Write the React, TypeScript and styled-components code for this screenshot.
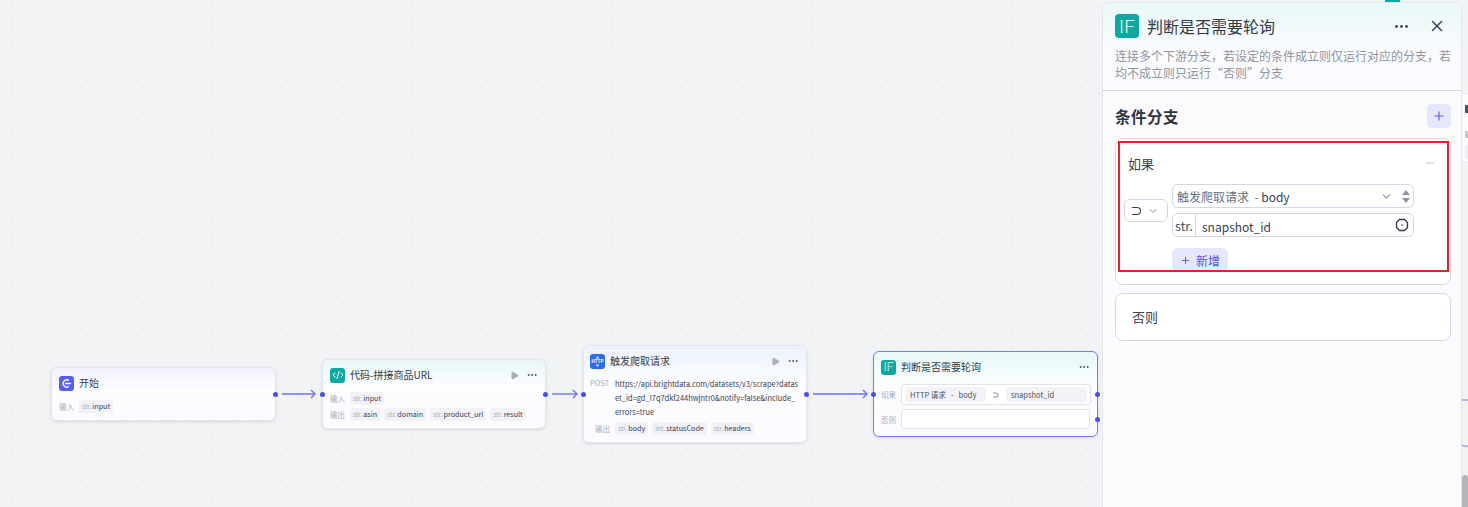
import styled, { createGlobalStyle } from 'styled-components'
import { ChevronDown, Ellipsis, Minus, Play, Plus, X } from 'lucide-react'

const GlobalStyle = createGlobalStyle`
  html, body {
    margin: 0;
    padding: 0;
    width: 1468px;
    height: 507px;
    overflow: hidden;
    background: #f2f3f5;
    font-family: "Noto Sans CJK SC", "Noto Sans", sans-serif;
    color: #354052;
  }
  * { box-sizing: border-box; }
`

const Page = styled.div`
  position: relative;
  width: 1468px;
  height: 507px;
  overflow: hidden;
  background-color: #f2f3f5;
  background-image: radial-gradient(circle at 1px 1px, #e9eaec 1px, transparent 1.2px);
  background-size: 12.5px 12.7px;
  background-position: 11px 4px;
`

const Edges = styled.svg`
  position: absolute;
  left: 0;
  top: 0;
  width: 1468px;
  height: 507px;
  pointer-events: none;
`

const Node = styled.div<{ $x: number; $y: number; $w: number; $h: number; $tint: string; $selected?: boolean; $pad?: number }>`
  position: absolute;
  left: ${p => p.$x}px;
  top: ${p => p.$y}px;
  width: ${p => p.$w}px;
  height: ${p => p.$h}px;
  border-radius: 6px;
  border: 1px solid ${p => (p.$selected ? '#7a7cf0' : '#e4e5ee')};
  background: linear-gradient(180deg, ${p => p.$tint} 0%, #fdfdff 42%, #fbfbff 100%);
  box-shadow: 0 1px 3px rgba(16, 24, 40, 0.12);
  padding: 0 7px 0 ${p => p.$pad ?? 7}px;
`

const NodeHead = styled.div<{ $h: number; $below?: number }>`
  display: flex;
  align-items: center;
  height: ${p => p.$h}px;
  padding-bottom: ${p => p.$below ?? 0}px;
  gap: 5px;
`

const Badge = styled.div<{ $bg: string; $size?: number }>`
  width: ${p => p.$size ?? 15}px;
  height: ${p => p.$size ?? 15}px;
  border-radius: ${p => ((p.$size ?? 15) > 18 ? 4 : 3)}px;
  background: ${p => p.$bg};
  color: #fff;
  flex: none;
  display: flex;
  align-items: center;
  justify-content: center;
  overflow: hidden;
`

const IfText = styled.span<{ $size: number }>`
  font-family: Roboto, "Liberation Sans", sans-serif;
  font-size: ${p => p.$size}px;
  line-height: 1;
  font-weight: 300;
  color: #e6fbf8;
`

const HttpBadge = styled(Badge)`
  flex-direction: column;
  gap: 0;
`

const HttpText = styled.span`
  font-family: "Liberation Sans", sans-serif;
  font-size: 4.500px;
  font-weight: 700;
  letter-spacing: 0.1px;
  line-height: 5px;
`

const NodeTitle = styled.div`
  flex: 1;
  font-size: 10px;
  line-height: 14px;
  white-space: nowrap;
  color: #333c4d;
  font-weight: 400;
`

const NodeActions = styled.div`
  display: flex;
  align-items: center;
  gap: 7px;
  color: #4a5263;
`

const Row = styled.div<{ $label?: number }>`
  display: flex;
  align-items: center;
  gap: 4px;
  height: 13px;
  margin-bottom: 3px;
  padding-left: ${p => p.$label ?? 0}px;
`

const Label = styled.div<{ $w?: number }>`
  font-size: 7.500px;
  color: #a8acb6;
  width: ${p => p.$w ?? 15}px;
  margin-right: 1px;
  flex: none;
  white-space: nowrap;
`

const Chip = styled.div`
  display: flex;
  align-items: center;
  gap: 1px;
  height: 13px;
  line-height: 13px;
  padding: 0 3px;
  border-radius: 3px;
  background: #f1f1f6;
  font-size: 7.200px;
  color: #39414f;
  white-space: nowrap;
`

const ChipType = styled.span`
  font-size: 6.500px;
  color: #a8acb6;
`

const UrlRow = styled.div`
  display: flex;
  gap: 5px;
  margin: 1px 0 3px;
`

const UrlText = styled.div`
  width: 185px;
  font-size: 7.450px;
  line-height: 14px;
  color: #39414f;
  word-break: break-all;
`

const Port = styled.div<{ $side: 'left' | 'right'; $y: number }>`
  position: absolute;
  ${p => p.$side}: -3px;
  top: ${p => p.$y}px;
  width: 5px;
  height: 5px;
  border-radius: 50%;
  background: #4b4ee8;
`

const IfRows = styled.div`
  display: flex;
  flex-direction: column;
  gap: 4px;
  margin-top: 2px;
`

const IfRow = styled.div`
  display: flex;
  align-items: center;
  gap: 4px;
`

const IfBox = styled.div<{ $h: number }>`
  flex: 1;
  height: ${p => p.$h}px;
  border: 1px solid #e2e3ea;
  border-radius: 3px;
  background: #fff;
  display: flex;
  align-items: center;
  padding: 0 3px;
  gap: 6px;
  font-size: 7.500px;
  color: #4a5263;
`

const IfChip = styled.div<{ $w: number }>`
  width: ${p => p.$w}px;
  height: 15px;
  border-radius: 3px;
  background: #f2f2f7;
  display: flex;
  align-items: center;
  padding: 0 5px;
  white-space: pre;
  font-size: 7.500px;
  color: #4a5263;
`

const Panel = styled.aside`
  position: absolute;
  left: 1102px;
  top: 2px;
  width: 360px;
  bottom: -4px;
  border: 1px solid #e4e5ef;
  border-radius: 8px 8px 0 0;
  background: #fbfbfe;
  display: flex;
  flex-direction: column;
`

const PanelHead = styled.header`
  height: 88px;
  flex: none;
  padding: 11px 12px 0;
  background: linear-gradient(180deg, #e9f8f8 0%, #fafbfe 55%, #fbfbfe 100%);
  border-radius: 8px 8px 0 0;
  border-bottom: 1px solid #d6d5e6;
`

const PanelTitleRow = styled.div`
  display: flex;
  align-items: center;
  gap: 8px;
  height: 24px;
`

const PanelTitle = styled.h2`
  flex: 1;
  margin: 0;
  font-size: 16px;
  font-weight: 400;
  color: #333845;
  white-space: nowrap;
`

const PanelTools = styled.div`
  display: flex;
  align-items: center;
  gap: 18px;
  margin-right: 3px;
  color: #3b4354;
`

const PanelDesc = styled.p`
  margin: 9px 0 0;
  font-size: 12px;
  line-height: 17px;
  color: #8f93a0;
  width: 340px;
`

const PanelBody = styled.div`
  padding: 13px 10px 0 12px;
  display: flex;
  flex-direction: column;
`

const SectionHead = styled.div`
  display: flex;
  align-items: center;
  justify-content: space-between;
  height: 24px;
  margin-bottom: 10px;
`

const SectionTitle = styled.h3`
  margin: 0;
  font-size: 15.500px;
  font-weight: 700;
  color: #2f3441;
  letter-spacing: 0.5px;
`

const SquareButton = styled.div`
  width: 24px;
  height: 24px;
  border-radius: 5px;
  background: #e6e6fd;
  color: #5d5df0;
  display: flex;
  align-items: center;
  justify-content: center;
`

const BranchCard = styled.section<{ $h: number }>`
  height: ${p => p.$h}px;
  border: 1px solid #d6d7e6;
  border-radius: 8px;
  background: #fff;
  margin-bottom: 8px;
  padding: 0 13px 0 8px;
`

const BranchTitle = styled.div<{ $top: number; $left: number }>`
  display: flex;
  align-items: center;
  justify-content: space-between;
  height: 20px;
  margin-top: ${p => p.$top}px;
  padding-left: ${p => p.$left}px;
  font-size: 13px;
  font-weight: 400;
  color: #3c4250;
`

const MinusMark = styled.span`
  color: #c3c5cf;
  display: flex;
`

const CondGrid = styled.div`
  display: flex;
  align-items: center;
  gap: 4px;
  margin-top: 11px;
`

const OpSelect = styled.div`
  width: 44px;
  height: 23px;
  border: 1px solid #d6d7e6;
  border-radius: 6px;
  display: flex;
  align-items: center;
  justify-content: space-between;
  padding: 0 8px 0 5px;
  font-size: 12px;
  color: #3c4250;
  background: #fff;
`

const CondFields = styled.div`
  display: flex;
  flex-direction: column;
  gap: 5px;
  width: 242px;
`

const Field = styled.div`
  height: 24px;
  border: 1px solid #d6d7e6;
  border-radius: 6px;
  display: flex;
  align-items: center;
  background: #fff;
  font-size: 12px;
  color: #3c4250;
  overflow: hidden;
`

const FieldValue = styled.span`
  flex: 1;
  padding-left: 4px;
  white-space: pre;
  color: #6b7080;
`

const FieldStrong = styled.span`
  color: #3c4250;
`

const Stepper = styled.div`
  width: 14px;
  display: flex;
  flex-direction: column;
  align-items: center;
  gap: 3px;
  margin-left: 6px;
`

const Arrow = styled.span<{ $down?: boolean }>`
  width: 0;
  height: 0;
  border-left: 4px solid transparent;
  border-right: 4px solid transparent;
  ${p => (p.$down ? 'border-top: 5px solid #8f93a0;' : 'border-bottom: 5px solid #8f93a0;')}
`

const StrTag = styled.span`
  width: 23px;
  height: 100%;
  flex: none;
  border-right: 1px solid #d6d7e6;
  display: flex;
  align-items: center;
  justify-content: center;
  font-size: 12.500px;
  color: #4a5263;
`

const StrValue = styled.span`
  flex: 1;
  padding-left: 6px;
  padding-top: 3px;
`

const AddButton = styled.div`
  width: 56px;
  height: 24px;
  margin: 11px 0 0 48px;
  border-radius: 6px;
  background: #e6e6fd;
  color: #5356d6;
  display: flex;
  align-items: center;
  justify-content: center;
  gap: 5px;
  font-size: 12px;
  font-weight: 400;
`

const Highlight = styled.div`
  position: absolute;
  left: 1118px;
  top: 141px;
  width: 331px;
  height: 131px;
  border: 2px solid #ee1c25;
  pointer-events: none;
`

const BehindCard = styled.div`
  position: absolute;
  left: 1462px;
  top: 93px;
  width: 6px;
  height: 70px;
  padding: 11px 0 0 3px;
  overflow: hidden;
  background: #fbfbfe;
  border-top: 1px solid #e8e9f0;
  border-bottom: 1px solid #e8e9f0;
`

// only slivers of this card show past the panel, so they are plain marks
const BehindMark = styled.div<{ $h: number; $top: number; $color: string }>`
  width: 3px;
  height: ${p => p.$h}px;
  margin-top: ${p => p.$top}px;
  background: ${p => p.$color};
`

const BehindTop = styled.div`
  position: absolute;
  left: 1385px;
  top: 0;
  width: 15px;
  height: 2px;
  background: #12a89d;
`

const ScrollThumb = styled.div`
  position: absolute;
  left: 1462px;
  top: 475px;
  width: 6px;
  height: 32px;
  border-radius: 3px 3px 0 0;
  background: #b3b5b8;
`

function IfBadge({ big }: { big?: boolean }) {
  return (
    <Badge $bg="#0fa8a0" $size={big ? 24 : 15}>
      <IfText $size={big ? 19 : 12}>IF</IfText>
    </Badge>
  )
}

function TypedChip({ type, name }: { type: string; name: string }) {
  return (
    <Chip>
      <ChipType>{type}</ChipType>
      {name}
    </Chip>
  )
}

function NodeTools({ run = true }: { run?: boolean }) {
  return (
    <NodeActions>
      {run && <Play size={9} fill="#a9adb8" color="#a9adb8" />}
      <Ellipsis size={12} />
    </NodeActions>
  )
}

function Supset({ size }: { size: number }) {
  return (
    <svg width={size} height={size} viewBox="0 0 10 10" fill="none" stroke="currentColor" strokeWidth="0.8">
      <path d="M1.500 2.500h3.500a2.500 2.500 0 0 1 0 5H1.500" />
    </svg>
  )
}

function Edge({ x1, x2 }: { x1: number; x2: number }) {
  return (
    <>
      <path d={`M${x1} 394H${x2}`} stroke="#6f72f2" strokeWidth="1.4" fill="none" />
      <path d={`M${x2 - 4} 390l4 4-4 4`} stroke="#6f72f2" strokeWidth="1.4" fill="none" />
    </>
  )
}

export default function App() {
  return (
    <Page lang="zh-CN">
      <GlobalStyle />
      <Edges viewBox="0 0 1468 507">
        <Edge x1={282} x2={315} />
        <Edge x1={552} x2={577} />
        <Edge x1={813} x2={867} />
        <path d="M1462 400H1468" stroke="#7b7ef2" strokeWidth="1" />
        <path d="M1462 445.500L1468 446.500" stroke="#7b7ef2" strokeWidth="1" />
      </Edges>

      <Node $x={51} $y={367} $w={225} $h={54} $tint="#f1f0fd">
        <NodeHead $h={32} $below={2}>
          <Badge $bg="#5a5ff0">
            <svg width="11" height="11" viewBox="0 0 12 12" fill="none">
              <path d="M8.500 2.600A4 4 0 1 0 8.500 9.400" stroke="#fff" strokeWidth="1.6" />
              <path d="M4.500 6H11" stroke="#fff" strokeWidth="1.8" />
            </svg>
          </Badge>
          <NodeTitle>开始</NodeTitle>
        </NodeHead>
        <Row>
          <Label>输入</Label>
          <TypedChip type="str." name="input" />
        </Row>
        <Port $side="right" $y={24} />
      </Node>

      <Node $x={322} $y={359} $w={224} $h={70} $tint="#e6f8f6">
        <NodeHead $h={32} $below={2}>
          <Badge $bg="#0fa8a0">
            <svg width="12" height="12" viewBox="0 0 12 12" fill="none" stroke="#fff" strokeWidth="1">
              <path d="M3.500 3.500L1 6l2.500 2.500M8.500 3.500L11 6 8.500 8.500M7 2L5 10" />
            </svg>
          </Badge>
          <NodeTitle>代码-拼接商品URL</NodeTitle>
          <NodeTools />
        </NodeHead>
        <Row>
          <Label>输入</Label>
          <TypedChip type="str." name="input" />
        </Row>
        <Row>
          <Label>输出</Label>
          <TypedChip type="str." name="asin" />
          <TypedChip type="str." name="domain" />
          <TypedChip type="str." name="product_url" />
          <TypedChip type="str." name="result" />
        </Row>
        <Port $side="left" $y={32} />
        <Port $side="right" $y={32} />
      </Node>

      <Node $x={583} $y={345} $w={224} $h={98} $tint="#eaf2fd" $pad={6}>
        <NodeHead $h={30}>
          <HttpBadge $bg="#2a6cf0">
            <svg width="9" height="3" viewBox="0 0 9 3" fill="#cfe0ff">
              <path d="M4.500 0L6.500 2.500H2.500z" />
            </svg>
            <HttpText>HTTP</HttpText>
            <svg width="9" height="3" viewBox="0 0 9 3" fill="#cfe0ff">
              <path d="M4.500 3L2.500 0.500H6.500z" />
            </svg>
          </HttpBadge>
          <NodeTitle>触发爬取请求</NodeTitle>
          <NodeTools />
        </NodeHead>
        <UrlRow>
          <Label $w={19}>POST</Label>
          <UrlText>https://api.brightdata.com/datasets/v3/scrape?dataset_id=gd_l7q7dkf244hwjntr0&notify=false&include_errors=true</UrlText>
        </UrlRow>
        <Row $label={5}>
          <Label>输出</Label>
          <TypedChip type="str." name="body" />
          <TypedChip type="int." name="statusCode" />
          <TypedChip type="str." name="headers" />
        </Row>
        <Port $side="left" $y={46} />
        <Port $side="right" $y={46} />
      </Node>

      <Node $x={873} $y={351} $w={225} $h={86} $tint="#e6f8f6" $selected>
        <NodeHead $h={30}>
          <IfBadge />
          <NodeTitle>判断是否需要轮询</NodeTitle>
          <NodeTools run={false} />
        </NodeHead>
        <IfRows>
          <IfRow>
            <Label $w={15}>如果</Label>
            <IfBox $h={21}>
              <IfChip $w={81}>HTTP 请求   -   body</IfChip>
              <Supset size={8} />
              <IfChip $w={81}>snapshot_id</IfChip>
            </IfBox>
          </IfRow>
          <IfRow>
            <Label $w={15}>否则</Label>
            <IfBox $h={20} />
          </IfRow>
        </IfRows>
        <Port $side="left" $y={40} />
        <Port $side="right" $y={40} />
        <Port $side="right" $y={65} />
      </Node>

      <BehindTop />
      <BehindCard>
        <BehindMark $h={8} $top={0} $color="#4a5263" />
        <BehindMark $h={7} $top={18} $color="#c3c5cf" />
        <BehindMark $h={12} $top={8} $color="#eeeef4" />
      </BehindCard>
      <ScrollThumb />

      <Panel>
        <PanelHead>
          <PanelTitleRow>
            <IfBadge big />
            <PanelTitle>判断是否需要轮询</PanelTitle>
            <PanelTools>
              <Ellipsis size={17} />
              <X size={18} />
            </PanelTools>
          </PanelTitleRow>
          <PanelDesc>连接多个下游分支，若设定的条件成立则仅运行对应的分支，若均不成立则只运行“否则”分支</PanelDesc>
        </PanelHead>
        <PanelBody>
          <SectionHead>
            <SectionTitle>条件分支</SectionTitle>
            <SquareButton>
              <Plus size={14} />
            </SquareButton>
          </SectionHead>
          <BranchCard $h={147}>
            <BranchTitle $top={14} $left={4}>
              如果
              <MinusMark>
                <Minus size={14} />
              </MinusMark>
            </BranchTitle>
            <CondGrid>
              <OpSelect>
                <Supset size={14} />
                <ChevronDown size={12} color="#8f93a0" />
              </OpSelect>
              <CondFields>
                <Field>
                  <FieldValue>
                    {'触发爬取请求  - '}<FieldStrong>body</FieldStrong>
                  </FieldValue>
                  <ChevronDown size={13} color="#8f93a0" />
                  <Stepper>
                    <Arrow />
                    <Arrow $down />
                  </Stepper>
                </Field>
                <Field>
                  <StrTag>str.</StrTag>
                  <StrValue>snapshot_id</StrValue>
                  <svg width="14" height="14" viewBox="0 0 14 14" fill="none" stroke="#333845" strokeWidth="1.3" style={{ marginRight: 4 }}>
                    <path d="M4.500 1.500h5L12.500 4.500v5l-3 3h-5l-3-3v-5z" strokeLinejoin="round" />
                    <circle cx="7" cy="7" r="0.8" fill="#333845" stroke="none" />
                  </svg>
                </Field>
              </CondFields>
            </CondGrid>
            <AddButton>
              <Plus size={11} />
              新增
            </AddButton>
          </BranchCard>
          <BranchCard $h={48}>
            <BranchTitle $top={12} $left={8}>否则</BranchTitle>
          </BranchCard>
        </PanelBody>
      </Panel>

      <Highlight />
    </Page>
  )
}
